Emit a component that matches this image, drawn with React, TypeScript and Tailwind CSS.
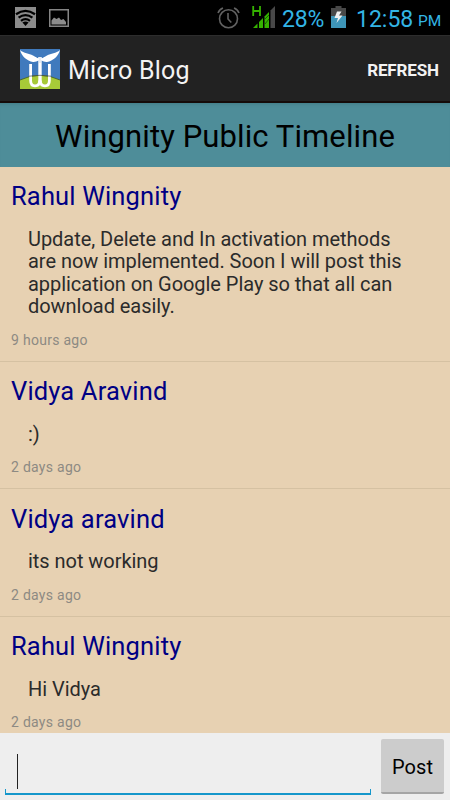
interface Post {
  author: string
  lines: string[]
  time: string
}

const posts: Post[] = [
  {
    author: 'Rahul Wingnity',
    lines: [
      'Update, Delete and In activation methods',
      'are now implemented. Soon I will post this',
      'application on Google Play so that all can',
      'download easily.',
    ],
    time: '9 hours ago',
  },
  { author: 'Vidya Aravind', lines: [':)'], time: '2 days ago' },
  { author: 'Vidya aravind', lines: ['its not working'], time: '2 days ago' },
  { author: 'Rahul Wingnity', lines: ['Hi Vidya'], time: '2 days ago' },
]

function WifiIcon() {
  return (
    <svg width="21" height="21" viewBox="0 0 21 21" fill="none">
      <rect width="21" height="21" fill="#8c8c8c" />
      <path d="M1 7.2Q10.5 0.4 20 7.2M3.6 10.6Q10.5 5.6 17.4 10.6M6 13.8Q10.5 10.4 15 13.8" stroke="#000" strokeWidth="2.3" />
      <path d="M7.4 15.4Q10.5 13.4 13.6 15.4L10.5 19Z" fill="#000" />
    </svg>
  )
}

function PictureIcon() {
  return (
    <svg width="20" height="18" viewBox="0 0 20 18">
      <rect x="0.75" y="0.75" width="18.5" height="16.5" fill="none" stroke="#858585" strokeWidth="1.5" />
      <path d="M2.5 15.5V11.5L5 8.5L7.5 10L10 8.5L12 11L14.5 10L17 13V15.5Z" fill="#8c8c8c" />
    </svg>
  )
}

function AlarmIcon() {
  return (
    <svg width="23" height="22" viewBox="0 0 23 22" fill="none" stroke="#626262">
      <circle cx="11.5" cy="11.8" r="9" strokeWidth="1.6" />
      <path d="M11 6V12L14.3 15.5" strokeWidth="1.6" />
      <path d="M1 6Q2.5 2.2 6 1M17 1Q20.5 2.2 22 6" strokeWidth="1.6" />
    </svg>
  )
}

function SignalIcon() {
  return (
    <svg width="24" height="24" viewBox="0 0 24 24">
      <path d="M1.2 1V11M8 1V11M1 6H8" stroke="#35b200" strokeWidth="1.8" />
      <path d="M1 23L5.5 18.5V23Z" fill="#35b200" />
      <path d="M7 17L11 13V23H7Z" fill="#35b200" />
      <path d="M12.5 11.5L17 7V23H12.5Z" fill="#35b200" />
      <path d="M13 14L17 10M13 19L17 14" stroke="#176000" strokeWidth="1" />
      <path d="M18.5 5.5L23 1V23H18.5Z" fill="#484848" />
    </svg>
  )
}

function BatteryIcon() {
  return (
    <svg width="15" height="22" viewBox="0 0 15 22">
      <path d="M4.5 0H10.5V2H15V22H0V2H4.5Z" fill="#484848" />
      <rect y="10" width="15" height="12" fill="#3e95b8" />
      <path d="M6 5.5L3.5 12H7L5.5 17L11.5 9.5H8L10.5 5.5Z" fill="#f0f0f0" />
    </svg>
  )
}

function Logo() {
  return (
    <svg width="40" height="40" viewBox="0 0 40 40" fill="none">
      <rect width="40" height="40" fill="#407abd" />
      <path d="M0 31Q20 21.5 40 31V40H0Z" fill="#a7ca38" />
      <path d="M0 31Q20 21.5 40 31" stroke="#3c5424" strokeWidth="0.8" />
      {/* wings */}
      <path d="M0 1C4 4.5 9 4.5 13 6.5C15.5 7.8 17 9 18.5 9.3H21.5C23 9 24.5 7.8 27 6.5C31 4.5 36 4.5 40 1C38.5 7 33 12 27 13C24.5 13.2 23 12 21.5 11.5H18.5C17 12 15.5 13.2 13 13C7 12 1.5 7 0 1Z" fill="#fff" />
      <path
        d="M10.6 15V31.5C10.6 35 12 36.8 15 36.8C18 36.8 19.7 35 19.7 31.5M20.3 31.5C20.3 35 22 36.8 25 36.8C28 36.8 29.4 35 29.4 31.5V15"
        stroke="#fff"
        strokeWidth="2.8"
      />
      <path d="M20 8V33" stroke="#fff" strokeWidth="3.4" />
      <path d="M20 8V14" stroke="#c3d0e2" strokeWidth="0.8" />
      <path d="M9 27.2Q20 25.4 31 27.2" stroke="#46524a" strokeWidth="0.7" />
    </svg>
  )
}

function StatusBar() {
  return (
    <div className="flex h-[35px] shrink-0 items-start bg-black text-[#33b5e5]">
      <div className="ml-[15px] mt-[7px] shrink-0"><WifiIcon /></div>
      <div className="ml-[13px] mt-[9px] shrink-0"><PictureIcon /></div>
      <div className="ml-[148px] mt-[7px] shrink-0"><AlarmIcon /></div>
      <div className="ml-[12px] mt-[5px] shrink-0"><SignalIcon /></div>
      <span className="ml-[6px] mt-[6px] w-[42px] shrink-0 whitespace-nowrap text-[23px] leading-[27px] tracking-[-0.2px]">28%</span>
      <div className="ml-[7px] mt-[6px] shrink-0"><BatteryIcon /></div>
      <span className="ml-[10px] mt-[6px] w-[58px] shrink-0 whitespace-nowrap text-[23px] leading-[27px]">12:58</span>
      <span className="ml-[4px] mt-[10px] shrink-0 whitespace-nowrap text-[15.5px] leading-[22px]">PM</span>
    </div>
  )
}

function PostItem({ post }: { post: Post }) {
  return (
    <li className="border-b border-[#d5c1a2] pl-[11px] pt-[13.5px] pb-[11.5px]">
      <h2 className="text-[25.5px] leading-[32px] tracking-[0.16px] text-[#000084]">{post.author}</h2>
      <div className="ml-[17px] mt-[15.5px] text-[20px] leading-[22.5px] tracking-[-0.04px] text-[#2b2b2b]">
        {post.lines.map((line) => (
          <p key={line} className="whitespace-nowrap">{line}</p>
        ))}
      </div>
      <p className="mt-[14px] text-[14px] leading-[17.5px] tracking-[0.28px] text-[#8d8a83]">{post.time}</p>
    </li>
  )
}

export default function App() {
  return (
    <div className="flex h-[800px] w-[450px] flex-col overflow-hidden bg-[#e7d1b2] font-['Roboto',sans-serif]">
      <StatusBar />
      <header className="flex h-[68px] shrink-0 items-center border-b-2 border-t border-b-[#150b09] border-t-[#2d2d2d] bg-[#222] pl-5 pr-[11px]">
        <Logo />
        <h1 className="ml-2 pt-[4px] text-[25px] leading-[30px] tracking-[0.2px] text-[#f3f3f3]">Micro Blog</h1>
        <button className="ml-auto pt-[3px] text-[17px] font-bold leading-5 tracking-[-0.12px] text-[#f3f3f3]">REFRESH</button>
      </header>
      <div className="flex h-[63.5px] shrink-0 items-center justify-center bg-[#4e8d99] pt-[5px] shadow-[inset_0_4px_4px_-4px_#3c737d]">
        <p className="whitespace-nowrap text-[31px] leading-9 tracking-[0.1px] text-black">Wingnity Public Timeline</p>
      </div>
      <ul className="min-h-0 flex-1 overflow-hidden">
        {posts.map((post, i) => (
          <PostItem key={i} post={post} />
        ))}
      </ul>
      <footer className="flex h-[67.5px] shrink-0 items-start bg-[#eee]">
        <div className="ml-[5px] mt-[5px] flex h-[57px] w-[366px] flex-col justify-end">
          <div className="ml-[12px] h-[35px] w-px bg-[#222]" />
          <div className="h-[6px] border-x border-b-2 border-[#1597cb]" />
        </div>
        <button className="ml-[10px] mt-[6.5px] h-[55px] w-[63px] rounded-[2px] border-b-2 border-[#a5a5a5] bg-[#ccc] pt-[3px] text-[20px] tracking-[0.1px] text-black">
          Post
        </button>
      </footer>
    </div>
  )
}
